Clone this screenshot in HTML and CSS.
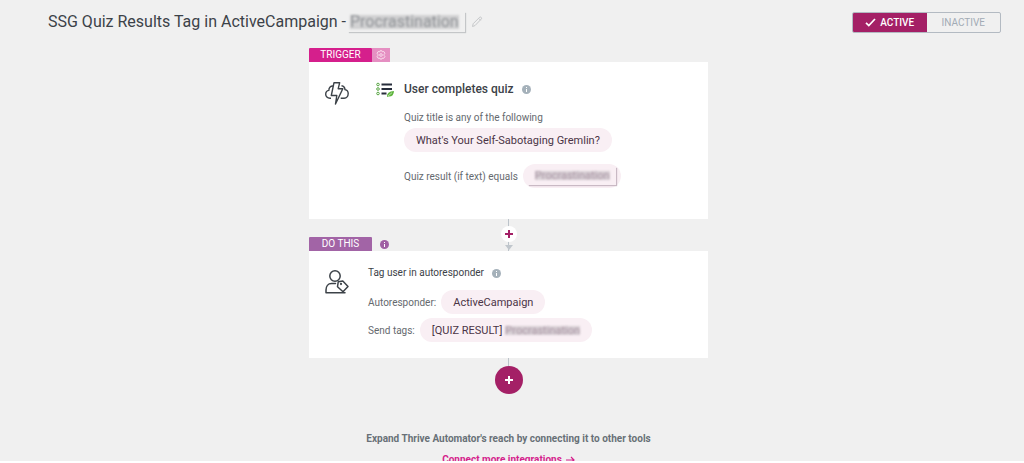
FILE: index.html
```html
<!DOCTYPE html>
<html lang="en">
<head>
    <meta charset="UTF-8">
    <meta name="viewport" content="width=device-width, initial-scale=1.0">
    <title>Thrive Automator</title>
    <link rel="stylesheet" href="styles.css">
</head>
<body>
<div class="page">
    <header class="header">
        <h1 class="title">SSG Quiz Results Tag in ActiveCampaign -</h1>
        <span class="title-hidden"><span class="redacted">Procrastination</span></span>
        <button class="icon-btn edit-btn" aria-label="Edit title">
            <svg width="12" height="12" viewBox="0 0 12 12" fill="none" stroke="#c6c8ca"><path d="M1.5 10.5l.7-2.8L8.7 1.2q.8-.5 1.5.2t.2 1.5L4 9.6zM7.6 2.3l2 2"/></svg>
        </button>
        <div class="status">
            <button class="status-btn active">
                <svg width="11" height="9" viewBox="0 0 11 9" fill="none" stroke="#fff" stroke-width="1.7"><path d="M1 4.8L3.8 7.5 10 1"/></svg>
                ACTIVE
            </button>
            <button class="status-btn">INACTIVE</button>
        </div>
    </header>

    <main class="flow">
        <section class="step">
            <div class="step-tabs">
                <span class="tab tab-trigger">TRIGGER</span>
                <button class="icon-btn tab-settings" aria-label="Trigger settings">
                    <svg width="10" height="10" viewBox="0 0 10 10" fill="none" stroke="#f9dcec"><path d="M4 .8h2l.4 1 1.4-.3 1.1 1.8-.8 1v1.2l.8 1-1.1 1.8-1.4-.3-.4 1H4l-.4-1-1.4.3-1.1-1.8.8-1V4.300l-.8-1 1.100-1.800 1.400.3z"/><circle cx="5" cy="5" r="1.300"/></svg>
                </button>
            </div>
            <div class="card card-trigger">
                <svg class="step-icon" width="26" height="26" viewBox="0 0 26 26" fill="none" stroke="#3c4248" stroke-width="1.400" stroke-linejoin="round">
                    <path d="M7 18.200H6C3.300 18.200 1.700 16.500 1.700 14.200c0-2 1.300-3.500 3.200-3.800C4.700 7.800 6.300 6 9 6M17.500 5.800c2.200.3 3.400 1.700 3.500 3.800 2.100.4 3.200 2 3.200 4 0 2.500-1.600 4.600-4 4.600h-3.500"/>
                    <path d="M10 2.700h5.700l-1.500 6h4.600L11.500 24l1.300-8.500H7.300z"/>
                </svg>
                <div class="card-body trigger-body">
                    <svg class="quiz-icon" width="18" height="16" viewBox="0 0 18 16" fill="none">
                        <g stroke="#272d3b" stroke-width="1.900"><path d="M5.500 2.500H16M5.500 7H16M5.500 11.500h5"/></g>
                        <g stroke="#59a544"><circle cx="2" cy="2.500" r="1.300"/><circle cx="2" cy="7" r="1.300"/><circle cx="2" cy="11.500" r="1.300"/></g>
                        <path fill="#5eb43d" d="M11 15q-.5-5.500 7-6-.2 5.800-5.500 5.500z"/><path stroke="#dff0d5" stroke-width=".7" d="M12 14l4-3.300"/>
                    </svg>
                    <div>
                        <h2 class="card-title strong">User completes quiz
                            <svg class="info" width="9" height="9" viewBox="0 0 9 9"><circle cx="4.500" cy="4.500" r="4.500" fill="#a5b1ba"/><path stroke="#fff" d="M4.500 4v3M4.500 2v1"/></svg>
                        </h2>
                        <p class="field-label">Quiz title is any of the following</p>
                        <span class="pill">What's Your Self-Sabotaging Gremlin?</span>
                        <p class="field result-field">Quiz result (if text) equals
                            <span class="pill pill-hidden"><span class="pill-patch"><span class="redacted small">Procrastination</span></span></span>
                        </p>
                    </div>
                </div>
            </div>
        </section>

        <div class="connector">
            <button class="icon-btn add-small" aria-label="Add step between">
                <svg width="10" height="10" viewBox="0 0 10 10" stroke="#a42066" stroke-width="2"><path d="M5 1v8M1 5h8"/></svg>
            </button>
            <svg class="arrow" width="8" height="5" viewBox="0 0 8 5"><path fill="#c0c6cc" d="M0 0h8L4 5z"/></svg>
        </div>

        <section class="step step-action">
            <div class="step-tabs">
                <span class="tab tab-action">DO THIS</span>
                <svg class="info tab-info" width="9" height="9" viewBox="0 0 9 9"><circle cx="4.500" cy="4.500" r="4.500" fill="#9f60a3"/><path stroke="#fff" d="M4.500 4v3M4.500 2v1"/></svg>
            </div>
            <div class="card card-action">
                <svg class="step-icon" width="26" height="26" viewBox="0 0 26 26" fill="none" stroke="#3c4248" stroke-width="1.500" stroke-linejoin="round" stroke-linecap="round">
                    <circle cx="11" cy="7" r="5.200"/>
                    <path d="M11.500 14.500H7.500C4 14.500 2 17.500 2 21v2.700h19M14.300 12.700l4.500-.7 5.200 5.500-5 5.200-5.500-5z"/>
                    <circle cx="17" cy="15" r=".4"/>
                </svg>
                <div class="card-body">
                    <h2 class="card-title">Tag user in autoresponder
                        <svg class="info" width="9" height="9" viewBox="0 0 9 9"><circle cx="4.500" cy="4.500" r="4.500" fill="#a5b1ba"/><path stroke="#fff" d="M4.500 4v3M4.500 2v1"/></svg>
                    </h2>
                    <p class="field">Autoresponder: <span class="pill">ActiveCampaign</span></p>
                    <p class="field">Send tags: <span class="pill">[QUIZ RESULT] <span class="redacted small">Procrastination</span></span></p>
                </div>
            </div>
        </section>

        <div class="line-end"></div>
        <button class="icon-btn add-big" aria-label="Add step">
            <svg width="10" height="10" viewBox="0 0 10 10" stroke="#fff" stroke-width="2"><path d="M5 1v8M1 5h8"/></svg>
        </button>

        <footer class="footer">
            <p class="footer-text">Expand Thrive Automator's reach by connecting it to other tools</p>
            <a class="more-link" href="#">Connect more integrations
                <svg width="9" height="8" viewBox="0 0 9 8" fill="none" stroke="#d51f8c" stroke-width="1.200"><path d="M0 4h8M5 1l3 3-3 3"/></svg>
            </a>
        </footer>
    </main>
</div>
</body>
</html>
```
FILE: styles.css
```css
:root {
    --primary: #a42066;
    --pink: #d51f8c;
    --purple: #a264a6;
    --text: #3c4248;
}

* {
    box-sizing: border-box;
}

body {
    margin: 0;
    background: #fff;
    color: var(--text);
    font-family: Roboto, "Liberation Sans", sans-serif;
    font-size: 10px;
}

h1, h2, p {
    margin: 0;
    font-weight: 400;
}

button {
    font-family: inherit;
    cursor: pointer;
}

.page {
    height: calc(100vh - 2px);
    overflow: hidden;
    background: #f0f0f0;
}

.header {
    display: flex;
    align-items: center;
    height: 48px;
    padding: 0 23px 4px 48px;
}

.title,
.title-hidden {
    font-size: 16px;
    line-height: 20px;
}

.title-hidden {
    margin-left: 2px;
    padding: 0 6px 0 2px;
    box-shadow: 1px 1px 1px #c4c6c8;
}

.redacted {
    display: inline-block;
    color: #909397;
    background: rgba(120, 120, 125, 0.25);
    filter: blur(1px);
    user-select: none;
}

.title-hidden .redacted {
    line-height: 14px;
}

.redacted.small {
    color: #a892a2;
    font-size: 11px;
    line-height: 9px;
}

.icon-btn {
    display: flex;
    align-items: center;
    justify-content: center;
    padding: 0;
    border: none;
    background: none;
}

.edit-btn {
    margin-left: 6px;
}

.status {
    display: flex;
    width: 149px;
    height: 21px;
    margin-left: auto;
    border: 1px solid #b3bac2;
    border-radius: 2px;
    overflow: hidden;
}

.status-btn {
    display: flex;
    flex: 1;
    align-items: center;
    justify-content: center;
    gap: 4px;
    padding: 0;
    border: none;
    background: none;
    color: #a2abb5;
    font-size: 10px;
}

.status-btn.active {
    background: var(--primary);
    color: #fff;
    font-weight: 500;
}

.flow {
    display: flex;
    flex-direction: column;
    align-items: center;
    padding-right: 7px;
}

.step {
    width: 100%;
    max-width: 399px;
}

.step-tabs {
    display: flex;
    align-items: center;
    height: 14px;
}

.tab {
    width: 63px;
    border-radius: 1px 1px 0 0;
    color: #fff;
    font-size: 10px;
    line-height: 14px;
    text-align: center;
}

.tab-trigger {
    background: var(--pink);
}

.tab-action {
    background: var(--purple);
}

.tab-settings {
    width: 18px;
    height: 14px;
    background: #e58fc2;
}

.tab-info {
    margin-left: 8px;
}

.card {
    display: flex;
    background: #fff;
}

.card-trigger {
    padding: 18px 16px 27px 15px;
    gap: 26px;
}

.card-action {
    padding: 15px 16px 12px 15px;
    gap: 18px;
}

.step-icon {
    flex: none;
}

.card-action .step-icon {
    margin-top: 3px;
}

.trigger-body {
    display: flex;
    gap: 10px;
}

.quiz-icon {
    flex: none;
    margin-top: 2px;
}

.card-title {
    display: flex;
    align-items: center;
    gap: 8px;
    margin-bottom: 10px;
    font-size: 10px;
    line-height: 14px;
}

.card-title.strong {
    margin-bottom: 14px;
    font-size: 12px;
    line-height: 18px;
    font-weight: 500;
}

.field-label,
.field {
    color: #65696e;
    font-size: 10px;
}

.field-label {
    line-height: 12px;
    margin-bottom: 4px;
}

.field {
    display: flex;
    align-items: center;
    gap: 5px;
    margin-bottom: 4px;
}

.result-field {
    margin-top: 12px;
}

.pill {
    display: inline-flex;
    align-items: center;
    gap: 3px;
    height: 24px;
    padding: 0 12px;
    border-radius: 12px;
    background: #f9eff4;
    color: #4b3446;
    font-size: 11px;
}

.pill-hidden {
    padding: 0 5px;
}

.pill-patch {
    padding: 2px 6px 3px 7px;
    box-shadow: 1px 1px 1px #c9b9c4;
}

.connector {
    display: flex;
    flex-direction: column;
    align-items: center;
    height: 32px;
    margin-bottom: -14px;
    padding-top: 7px;
    background: linear-gradient(#bcc3ca, #bcc3ca) center / 1px 100% no-repeat;
}

.add-small {
    width: 16px;
    height: 16px;
    border-radius: 50%;
    background: #fff;
}

.arrow {
    margin-top: 3px;
}

.line-end {
    width: 1px;
    height: 8px;
    background: #bcc3ca;
}

.add-big {
    width: 28px;
    height: 28px;
    border-radius: 50%;
    background: var(--primary);
}

.footer {
    margin-top: 38px;
    color: #687077;
    font-size: 10px;
    line-height: 14px;
    text-align: center;
}

.footer-text,
.more-link {
    font-weight: 700;
}

.more-link {
    display: inline-flex;
    align-items: center;
    gap: 4px;
    margin-top: 7px;
    color: var(--pink);
    text-decoration: none;
}
```
